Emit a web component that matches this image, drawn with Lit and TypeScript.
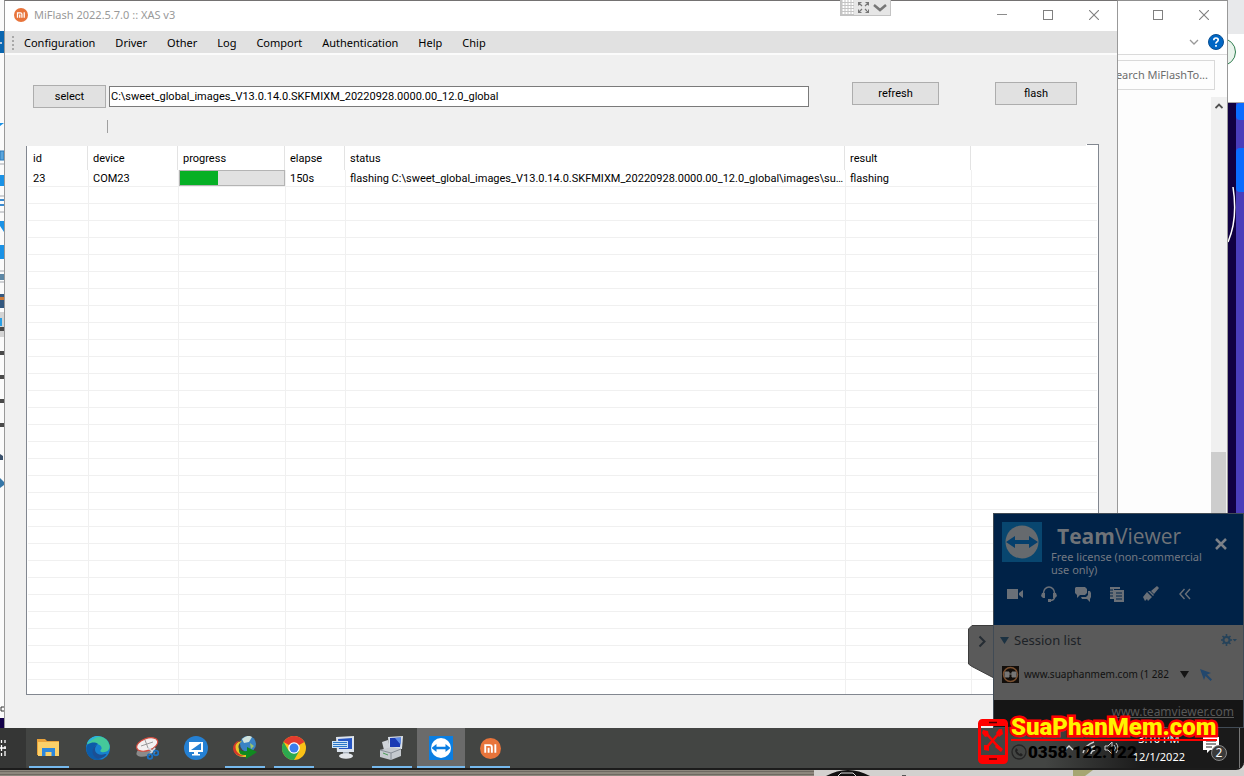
import { LitElement, html, css, svg } from "lit";
import { customElement } from "lit/decorators.js";

type Device = {
  id: string;
  device: string;
  progress: number;
  elapse: string;
  status: string;
  result: string;
};

const MENU = ["Configuration", "Driver", "Other", "Log", "Comport", "Authentication", "Help", "Chip"];

const DEVICES: Device[] = [
  {
    id: "23",
    device: "COM23",
    progress: 37,
    elapse: "150s",
    status: "flashing C:\\sweet_global_images_V13.0.14.0.SKFMIXM_20220928.0000.00_12.0_global\\images\\su…",
    result: "flashing",
  },
];

const EMPTY_ROWS = 29;

const miLogo = (size: number) => html`<svg width=${size} height=${size} viewBox="0 0 20 20" aria-hidden="true">
  <circle cx="10" cy="10" r="10" fill="#e8743b" />
  <path d="M5 14V6.800h4.200q2.100 0 2.100 2.200v5M8.200 14V9.400M14.600 6V14" fill="none" stroke="#fff" stroke-width="1.800" />
</svg>`;

const iconMin = html`<svg width="10" height="10" viewBox="0 0 10 10" aria-hidden="true"><path d="M0 4.500h10" stroke="#8c8c8c" /></svg>`;
const iconMax = html`<svg width="10" height="10" viewBox="0 0 10 10" aria-hidden="true"><rect x=".5" y=".5" width="9" height="9" fill="none" stroke="#808080" /></svg>`;
const iconClose = html`<svg width="10" height="10" viewBox="0 0 10 10" aria-hidden="true"><path d="M0 0l10 10M10 0L0 10" stroke="#808080" stroke-width="1.100" /></svg>`;

const captionButtons = () => html`<div class="caption">
  <button aria-label="Minimize">${iconMin}</button>
  <button aria-label="Maximize">${iconMax}</button>
  <button aria-label="Close">${iconClose}</button>
</div>`;

const icons = {
  folder: svg`<path d="M0 3h8l2 2h12v14H0z" fill="#e9a33b"/><path d="M1 6h21v14H1z" fill="#fbd069"/><path d="M5 20v-8h13v8h-3.500v-4h-6v4z" fill="#2d87dc"/>`,
  edge: svg`<circle cx="12" cy="12" r="12" fill="#1681cf"/><path d="M1 8C4-2 20-3 23.500 9c1 5-3 8-8 7-2-.5-1-2 0-3 1-4-6-7-14-5z" fill="#45c99a"/><path d="M1 8C3 1 10-1 15 .6c-6 .5-9 4-13 6z" fill="#2bb3dc"/><path d="M.2 13C0 7 8 5 12 8c-7 2-6 13 4 15.200C9 26 1 22 .2 13z" fill="#0d5ba8"/><path d="M11 9c-5 5 0 12 8 9 1 0 2 0 1 1-3 4-9 5-12 1-3-4-1-10 3-11z" fill="#1b4f94"/>`,
  snip: svg`<ellipse cx="11" cy="15" rx="10" ry="5" fill="#8b8b8b" transform="rotate(-20 11 15)"/><ellipse cx="12" cy="8.500" rx="11" ry="6" fill="#f3f0f0" stroke="#d34c3f" stroke-width="1.200" transform="rotate(-20 12 8)"/><path d="M10 4l3 8M6 10l12-4" stroke="#9a9a9a"/><path d="M13 12l7 5M20 12l-6 7" stroke="#cfd8e0" stroke-width="1.500"/><circle cx="15" cy="20.500" r="2.300" fill="none" stroke="#1d72c2" stroke-width="1.800"/><circle cx="21" cy="17" r="2.300" fill="none" stroke="#1d72c2" stroke-width="1.800"/>`,
  remote: svg`<circle cx="12" cy="12" r="12" fill="#2580d3"/><path d="M5 6h14v10H5z" fill="#fff"/><path d="M7 14l10-7v7z" fill="#2580d3"/><path d="M10 16h4v2h2v1.500H8V18h2z" fill="#fff"/>`,
  idm: svg`<circle cx="15" cy="8" r="8" fill="#3a83c4"/><path d="M9 3q6-5 10-2l-3 5-5 1z" fill="#cfe2dc"/><path d="M17 7l4 3-3 3z" fill="#9cc66b"/><path d="M1 13Q1 6 9 5q-5 4-3 8 2 5 7 4v4Q2 22 1 13z" fill="#e9c52a"/><path d="M0 13Q0 6 7 4.500Q1 8 3 14q2 5 9 6Q1 21 0 13z" fill="#d5382a"/><path d="M6 12q1 4 8 3v-4l10 5-11 7v-4q-8 1-7-7z" fill="#108a20"/>`,
  chrome: svg`<circle cx="12" cy="12" r="12" fill="#fbc116"/><path d="M12 12L1.600 6A12 12 0 0 1 22.400 6z" fill="#e33b2e"/><path d="M1.600 6A12 12 0 0 0 12 24l5.200-9L12 12 6.800 15z" fill="#2da94f"/><circle cx="12" cy="12" r="5.800" fill="#fff"/><circle cx="12" cy="12" r="4.500" fill="#3b7ded"/>`,
  monitor: svg`<path d="M5 1l18-1v16H6z" fill="#dce3ec"/><path d="M7 3l14-1v11H8z" fill="#2555c4"/><path d="M1 5h16v7H1z" fill="#cfe3f5"/><path d="M2 6.500h14M2 8.500h14M2 10.500h14" stroke="#2c78c9"/><path d="M12 16h6v4h-6z" fill="#aab3bd"/><ellipse cx="15" cy="20" rx="7" ry="2.800" fill="#e3e6ea"/>`,
  flasher: svg`<path d="M8 1l15-1-1 13H9z" fill="#d9e0e8"/><path d="M10 2l11-.5-1 9.500H10z" fill="#1b3bb4"/><path d="M15 2l6-.5-.5 7z" fill="#5b8be8"/><path d="M2 6l6-2 2 8-6 2z" fill="#cfd3d8"/><path d="M0 14l12-3 9 2v7l-10 4-11-3z" fill="#c5c9ce"/><path d="M0 14l11 3 10-4M11 17v7" stroke="#868c94" fill="none"/><path d="M3 17l5 2" stroke="#4a9b57"/>`,
  teamviewer: svg`<path d="M0 0h24v24H0z" fill="#0b7ee2"/><circle cx="12" cy="12" r="10" fill="#fff"/><path d="M2.500 12l5-4v2.800h9V8l5 4-5 4v-2.800h-9V16z" fill="#0b7ee2"/>`,
};

const APPS = [
  { name: "File Explorer", icon: icons.folder, open: true },
  { name: "Edge", icon: icons.edge, open: false },
  { name: "Snipping Tool", icon: icons.snip, open: false },
  { name: "Remote Desktop", icon: icons.remote, open: false },
  { name: "Download Manager", icon: icons.idm, open: true },
  { name: "Chrome", icon: icons.chrome, open: true },
  { name: "Virtual Keyboard", icon: icons.monitor, open: false },
  { name: "Flash Tool", icon: icons.flasher, open: true },
  { name: "TeamViewer", icon: icons.teamviewer, open: true, active: true },
  { name: "MiFlash", icon: null, open: true },
];

const shared = css`
  * { box-sizing: border-box; }
  button { font: inherit; color: inherit; border: 0; padding: 0; background: none; display: grid; place-items: center; }
  svg { display: block; }
  .caption { display: flex; }
  .caption button { width: 46px; height: 28px; flex: none; }
`;

@customElement("flash-window")
class FlashWindow extends LitElement {
  static styles = [shared, css`
    :host { display: flex; flex-direction: column; min-width: 0; background: #f0f0f0; border: solid #999; border-width: 0 1px; border-top: 1px solid #747272; font: 11px/16px "Roboto", sans-serif; color: #000; }
    .title { display: flex; align-items: center; height: 30px; padding: 0 0 2px 9px; gap: 6px; background: #fff; color: #999; font: 11px/16px "Noto Sans", sans-serif; }
    .title h1 { font: inherit; margin: 0; flex: 1; }
    .menu { display: flex; align-items: center; height: 22px; padding: 2px 0 0 7px; background: #e1e1e1; font: 11px/16px "Noto Sans", sans-serif; }
    .menu button { padding: 0 10px; white-space: nowrap; }
    .edge { height: 2px; background: #fbfbfb; }
    .tools { display: flex; align-items: flex-start; padding: 27px 40px 0 28px; }
    .path { display: flex; align-items: center; gap: 3px; flex: 1; padding-top: 3px; margin-right: 43px; }
    .push { height: 23px; background: #e1e1e1; border: 1px solid #adadad; }
    .select { width: 73px; }
    .refresh { width: 87px; margin-right: 56px; }
    .flash { width: 82px; }
    input { flex: 1; min-width: 0; height: 21px; border: 1px solid #7a7a7a; padding: 0 1px; background: #fff; font: inherit; color: #000; border-radius: 0; }
    .tick { width: 1px; height: 13px; margin: 12px 0 11px 102px; background: #a0a0a0; }
    .list { margin: 0 18px 33px 21px; border: 1px solid #828790; border-top: 0; background: #fff; padding: 2px 1px 0; position: relative; }
    .list::before { content: ""; position: absolute; right: -1px; top: 0; width: 12px; height: 1px; background: #828790; }
    .list::after { content: ""; position: absolute; left: -1px; right: 0; top: 0; height: 2px; background: linear-gradient(#f0f0f0, #f0f0f0) left / calc(100% - 12px) 2px no-repeat; }
    table { width: 100%; table-layout: fixed; border-collapse: separate; border-spacing: 0; }
    th, td { padding: 0 0 0 4px; text-align: left; font-weight: normal; white-space: nowrap; overflow: hidden; }
    th { height: 24px; padding-top: 2px; background: linear-gradient(#e3e3e3, #e3e3e3) right 1px top / 1px 100% no-repeat; }
    td { height: 17px; line-height: 14px; border: solid #f0f0f0; border-width: 0 1px 1px 0; }
    th:first-child, tr td:first-child { padding-left: 5px; }
    th:last-child, td:last-child { border-right: 0; background: none; }
    .first td { padding-top: 2px; }
    .first .bar { padding: 0; }
    .rest td { height: 14px; border-bottom: 0; }
    .c1 { width: 61px; } .c2 { width: 90px; } .c3 { width: 107px; } .c4 { width: 60px; } .c6 { width: 126px; } .c7 { width: 125px; }
    progress { appearance: none; display: block; width: 100%; height: 16px; border: 1px solid #b4b4b4; background: #e1e1e1; }
    progress::-webkit-progress-bar { background: #e1e1e1; }
    progress::-webkit-progress-value { background: #06b025; }
  `];

  render() {
    const cols = ["id", "device", "progress", "elapse", "status", "result", ""];
    return html`
      <header class="title">${miLogo(14)}<h1>MiFlash 2022.5.7.0 :: XAS v3</h1>${captionButtons()}</header>
      <nav class="menu">
        <svg width="2" height="14" viewBox="0 0 2 14" aria-hidden="true"><path d="M1 0v14" stroke="#a8a8a8" stroke-width="2" stroke-dasharray="2 2" /></svg>
        ${MENU.map((m) => html`<button>${m}</button>`)}
      </nav>
      <div class="edge"></div>
      <div class="tools">
        <div class="path">
          <button class="push select">select</button>
          <input aria-label="Image folder" .value=${"C:\\sweet_global_images_V13.0.14.0.SKFMIXM_20220928.0000.00_12.0_global"} />
        </div>
        <button class="push refresh">refresh</button>
        <button class="push flash">flash</button>
      </div>
      <div class="tick"></div>
      <div class="list">
        <table>
          <colgroup>${[1, 2, 3, 4, 5, 6, 7].map((n) => html`<col class="c${n}" />`)}</colgroup>
          <thead><tr>${cols.map((c) => html`<th>${c}</th>`)}</tr></thead>
          <tbody>
            ${DEVICES.map((d) => html`<tr class="first">
              <td>${d.id}</td><td>${d.device}</td>
              <td class="bar"><progress aria-label="Progress" max="100" value=${d.progress}></progress></td>
              <td>${d.elapse}</td><td>${d.status}</td><td>${d.result}</td><td></td>
            </tr>`)}
            ${Array.from({ length: EMPTY_ROWS }, () => html`<tr>${cols.map(() => html`<td></td>`)}</tr>`)}
            <tr class="rest">${cols.map(() => html`<td></td>`)}</tr>
          </tbody>
        </table>
      </div>`;
  }
}

@customElement("explorer-window")
class ExplorerWindow extends LitElement {
  static styles = [shared, css`
    :host { display: flex; flex-direction: column; min-width: 0; overflow: hidden; background: #fdfdfd; border-top: 1px solid #8f8f8f; border-right: 1px solid #999; font: 11px/16px "Noto Sans", sans-serif; color: #6d6d6d; }
    .caption { justify-content: flex-end; height: 29px; background: #fff; }
    .ribbon { display: flex; justify-content: flex-end; align-items: center; gap: 9px; height: 25px; padding-right: 3px; border-bottom: 1px solid #dadada; background: #fff; }
    .search { display: flex; justify-content: flex-end; height: 30px; margin: 5px 12px 7px 0; border: 1px solid #d9d9d9; border-left: 0; }
    .search input { width: 124px; flex: none; border: 0; padding: 0 6px 0 0; background: none; text-align: right; font: inherit; color: inherit; }
    .search input::placeholder { color: #6d6d6d; opacity: 1; }
    .scroll { flex: 1; align-self: flex-end; width: 16px; background: #f0f0f0; display: flex; flex-direction: column; }
    .scroll button { height: 17px; }
    .track { flex: 338; }
    .thumb { flex: 276; margin-right: 1px; background: #cdcdcd; }
  `];
  render() {
    return html`
      ${captionButtons()}
      <div class="ribbon">
        <svg width="10" height="6" viewBox="0 0 10 6" aria-hidden="true"><path d="M1 1l4 4 4-4" fill="none" stroke="#999" stroke-width="1.300" /></svg>
        <svg width="16" height="16" viewBox="0 0 16 16" role="img" aria-label="Help"><circle cx="8" cy="8" r="7.500" fill="#0067c5" stroke="#0a4f92" /><path d="M5.800 6.200Q5.800 4 8 4t2.200 2q0 1-1.200 1.700T8 9.600M8 11v1.800" fill="none" stroke="#fff" stroke-width="1.700" /></svg>
      </div>
      <div class="search"><input aria-label="Search MiFlashTool" placeholder="Search MiFlashTo..." /></div>
      <div class="scroll">
        <button aria-label="Scroll up"><svg width="8" height="6" viewBox="0 0 8 6" aria-hidden="true"><path d="M.5 5L4 1.500 7.500 5" fill="none" stroke="#505050" stroke-width="1.800" /></svg></button>
        <div class="track"></div><div class="thumb"></div>
      </div>`;
  }
}

@customElement("session-panel")
class SessionPanel extends LitElement {
  static styles = [shared, css`
    :host { display: flex; align-items: flex-start; font: 11px/13px "Noto Sans", sans-serif; color: #737982; }
    .handle { margin-top: 112px; flex: none; }
    .panel { flex: 1; min-width: 0; border: 1px solid #414b55; background: #5a5a5a; }
    .head { height: 111px; background: #002247; padding: 8px 16px 0 8px; }
    .brand { display: flex; gap: 9px; height: 64px; }
    .brand h2 { margin: 0 0 0 6px; font: 21px/28px "Open Sans", sans-serif; color: #6f7378; height: 28px; }
    .brand p { margin: 0; }
    .words { flex: 1; white-space: nowrap; }
    .close { align-self: flex-start; margin-top: 16px; }
    .icons { display: flex; gap: 18px; padding-left: 5px; }
    .icons button { width: 16px; height: 16px; }
    .session { display: flex; align-items: center; height: 30px; padding: 0 6px 0 6px; gap: 5px; font: 13px/18px "Noto Sans", sans-serif; color: #1d2227; }
    .session span { flex: 1; }
    .peer { display: flex; align-items: center; height: 45px; padding: 0 0 6px 8px; font-size: 10px; color: #111; }
    .peer span { width: 147px; margin: 0 9px 0 5px; white-space: nowrap; }
    .peer svg + svg { margin-left: 11px; }
    .foot { height: 27px; background: #151515; text-align: right; padding: 4px 9px 0 0; font: 12px/16px "Noto Sans", sans-serif; }
    .foot a { color: #585858; }
  `];
  render() {
    return html`
      <svg class="handle" width="25" height="54" viewBox="0 0 25 54" aria-hidden="true">
        <path d="M25 .5H4L.5 4v35L4 41.500 25 52.500" fill="#5a5a5a" stroke="#3c3c3c" /><path d="M11.500 11.500l5 5-5 5" fill="none" stroke="#252c33" stroke-width="2" />
      </svg>
      <section class="panel">
        <div class="head">
          <div class="brand">
            <svg width="40" height="40" viewBox="0 0 40 40" aria-hidden="true"><path d="M0 0h40v40H0z" fill="#08466f" /><circle cx="20" cy="20" r="16.500" fill="#666a6e" /><path d="M4 20l9-6v4h14v-4l9 6-9 6v-4H13v4z" fill="#053f6c" /></svg>
            <div class="words"><h2><b>Team</b>Viewer</h2><p>Free license (non-commercial<br />use only)</p></div>
            <button class="close" aria-label="Close"><svg width="12" height="12" viewBox="0 0 12 12" aria-hidden="true"><path d="M1 1l10 10M11 1L1 11" stroke="#7b8087" stroke-width="2.500" /></svg></button>
          </div>
          <div class="icons">
            <button aria-label="Video"><svg width="16" height="12" viewBox="0 0 16 12"><path d="M0 1h11v10H0zM12 5l4-3v8l-4-3z" fill="#6a7078" /></svg></button>
            <button aria-label="Audio"><svg width="16" height="16" viewBox="0 0 16 16"><path d="M2.500 9V7a5.500 6 0 0 1 11 0v2M13.500 11q0 3.500-5 3.500" fill="none" stroke="#6a7078" stroke-width="1.500" /><path d="M1 7h3v5H2L0 10zM15 7h-3v5h2l2-2zM7 13h3v3H7z" fill="#6a7078" /></svg></button>
            <button aria-label="Chat"><svg width="16" height="16" viewBox="0 0 16 16"><path d="M1 1h9l2 2v4l-2 2H5l-3 3V9L0 7V2z" fill="#6a7078" /><path d="M13 5h2l1 2v4l-1 2v3l-3-3H7l-1-2h5l2-2z" fill="#6a7078" /></svg></button>
            <button aria-label="Files"><svg width="16" height="16" viewBox="0 0 16 16"><path d="M1 1h10v2H5v10H1z" fill="#6a7078" /><path d="M5 4h10v12H5z" fill="#6a7078" /><path d="M1 4h3M1 7h3M1 10h3M7 7h6M7 10h6M7 13h6" stroke="#002247" /></svg></button>
            <button aria-label="Whiteboard"><svg width="16" height="16" viewBox="0 0 16 16"><path d="M14 0l2 2-5 6-3-3zM7 5l4 4-1 1-5-5zM4 6l5 5-4 4-1-2-2 2-1-2-1-2z" fill="#6a7078" /></svg></button>
            <button aria-label="Collapse"><svg width="12" height="12" viewBox="0 0 12 12"><path d="M5.500 1L1 6l4.500 5M11 1L6.500 6l4.500 5" fill="none" stroke="#6a7078" stroke-width="1.400" /></svg></button>
          </div>
        </div>
        <div class="session">
          <svg width="9" height="7" viewBox="0 0 9 7" aria-hidden="true"><path d="M0 0h9L4.500 7z" fill="#1c3242" /></svg>
          <span>Session list</span>
          <svg width="16" height="12" viewBox="0 0 16 12" aria-hidden="true"><circle cx="5.500" cy="6" r="3" fill="none" stroke="#26435a" stroke-width="2" /><path d="M5.500 0v2.500M5.500 9.500V12M0 6h2M9 6h2M1.500 2l1.500 1.500M8 8.500L9.500 10M9.500 2L8 3.500M3 8.500L1.500 10" stroke="#26435a" stroke-width="1.600" /><path d="M11.500 5H16l-2.200 2.500z" fill="#26435a" /></svg>
        </div>
        <div class="peer">
          <svg width="17" height="17" viewBox="0 0 17 17" aria-hidden="true"><path d="M0 0h17v17H0z" fill="#120e0b" /><circle cx="8.500" cy="8.500" r="7" fill="none" stroke="#7a5030" stroke-width="1.500" /><path d="M3 6h4v5H3zM10 6h4v5h-4zM3 8h11" fill="#777" stroke="#777" /></svg>
          <span>www.suaphanmem.com (1 282</span>
          <svg width="9" height="7" viewBox="0 0 9 7" aria-hidden="true"><path d="M0 0h9L4.500 7z" fill="#141414" /></svg>
          <svg width="12" height="12" viewBox="0 0 12 12" aria-hidden="true"><path d="M0 0l11 4-4 1.500 5 5L10.500 12l-5-5L4 11z" fill="#22476d" /></svg>
        </div>
        <div class="foot"><a href="#">www.teamviewer.com</a></div>
      </section>`;
  }
}

@customElement("app-root")
class AppRoot extends LitElement {
  static styles = [shared, css`
    :host { display: block; position: relative; min-height: 100vh; overflow: hidden; background: #d8d6d4; font: 11px/16px "Noto Sans", sans-serif; }
    .work { display: grid; grid-template-columns: 4px minmax(0, 1fr) 110px 16px; }
    .sliver, .backdrop { min-height: 0; overflow: hidden; }
    .backdrop { background: linear-gradient(90deg, #100042 8px, #4a3dba 8px); }
    .taskbar { display: flex; height: 42px; padding-right: 4px; background: linear-gradient(90deg, #353635 26px, #434543 26px, #434543 84%, #1a1a1a 92%); border-bottom: 2px solid #1c1c1c; border-radius: 0 0 8px 0; color: #fff; }
    .task { width: 25px; justify-items: start; }
    .apps { display: flex; gap: 1px; flex: 1; }
    .apps button { width: 48px; height: 40px; position: relative; }
    .apps .open::after { content: ""; position: absolute; left: 4px; right: 4px; bottom: 0; height: 2px; background: #76b9ed; }
    .apps .active { background: #6b6b6b; }
    .apps .active::after { left: 0; right: 0; }
    .tray { display: flex; align-items: center; gap: 8px; }
    .clock { text-align: center; line-height: 18px; margin: 0 1px 0 6px; }
    .note { width: 46px; height: 40px; padding-right: 4px; border-right: 1px solid #777; }
    .below { height: 6px; overflow: hidden; }
    .remote { position: absolute; left: 840px; top: 0; display: flex; align-items: center; height: 16px; width: 51px; background: #e6e6e6; border: 1px solid #c3c3c3; border-top: 0; gap: 4px; }
    .session { position: absolute; right: 0; bottom: 48px; width: 276px; }
    .mark { position: absolute; right: 28px; bottom: 12px; width: 238px; display: grid; grid-template-columns: 30px 1fr; column-gap: 3px; align-items: end; }
    .mark strong { display: block; font: 900 24px/24px "Roboto", sans-serif; color: #fff200; -webkit-text-stroke: 5px #f00; paint-order: stroke fill; white-space: nowrap; border-bottom: 2px solid #f00; }
    .phone { display: flex; align-items: center; gap: 1px; padding: 2px 0 3px; font: 900 17px/18px "Roboto", sans-serif; color: #000; }
  `];

  render() {
    return html`
      <div class="work">
        <svg class="sliver" width="4" height="728" viewBox="0 0 4 728" aria-hidden="true">
          <path d="M0 0h4v728H0z" fill="#fbfbfb" /><path d="M0 31h4v22H0z" fill="#0a66b0" /><path d="M0 42h2v2H0z" fill="#b9c8dc" />
          <path d="M0 123h4l-4 3zM0 175h4v11H0zM0 221h4v11l-4-6zM0 245h4v14H0z" fill="#1a92e6" />
          <path d="M0 151h4v9H0z" fill="#5aa5dc" stroke="#2a78b8" /><path d="M0 164h4M0 196h4M0 212h4M0 271h4M0 282h4" stroke="#a2a6ad" />
          <path d="M0 199h4v2H0zM0 204h4v2H0z" fill="#3b8bd0" /><path d="M0 274h4v6H0z" fill="#5d87a5" />
          <path d="M0 294h4v14H0z" fill="#34587f" /><path d="M0 297h4v3H0z" fill="#cf7b38" />
          <path d="M0 312h4v25H0z" fill="#d4d4d4" /><path d="M0 318h2v8H0z" fill="#2aa0e6" />
          <path d="M0 327h4v4H0zM0 351h4v4H0zM0 375h4v4H0zM0 399h4v4H0zM0 423h4v4H0z" fill="#4a4a4a" />
          <path d="M0 454l3 2v4H0z" fill="#3a506b" /><path d="M0 478l4 4v3l-4 3z" fill="#3577a8" /><path d="M1 707h3M1 707v4h3" stroke="#333" fill="none" />
          <path d="M0 718h4v10H0z" fill="#120048" />
        </svg>
        <flash-window></flash-window>
        <explorer-window></explorer-window>
        <svg class="backdrop" width="16" height="728" viewBox="0 0 16 728" aria-hidden="true">
          <path d="M0 0h16v34H0z" fill="#e8e9eb" /><path d="M0 34h16v68H0z" fill="#fff" />
          <circle cx="-6" cy="52" r="13.500" fill="#e9f3ec" stroke="#2f7d4f" /><path d="M0 102h16v1H0z" fill="#aaa" />
          <rect x="8" y="103" width="12" height="17" rx="4" fill="#0a6cff" /><rect x="8" y="148" width="12" height="44" rx="4" fill="#0a6cff" />
          <path d="M5 187q5 32-5 55" fill="none" stroke="#fff" stroke-width="1.500" />
        </svg>
      </div>
      <footer class="taskbar">
        <button class="task" aria-label="Task View"><svg width="7" height="16" viewBox="0 0 7 16"><path d="M1.500 0v3M1.500 5v6M1.500 13v3M5 0v3M5 6v3M5 11v5M0 8h6" stroke="#fff" stroke-width="1.300" /></svg></button>
        <div class="apps">
          ${APPS.map((a) => html`<button aria-label=${a.name} class="${a.open ? "open" : ""} ${a.active ? "active" : ""}">
            ${a.icon ? html`<svg width="24" height="24" viewBox="0 0 24 24" aria-hidden="true">${a.icon}</svg>` : miLogo(21)}
          </button>`)}
        </div>
        <div class="tray">
          <svg width="10" height="8" viewBox="0 0 10 8" aria-hidden="true"><path d="M1 6l4-4 4 4" fill="none" stroke="#ddd" stroke-width="1.300" /></svg>
          <svg width="14" height="14" viewBox="0 0 14 14" aria-hidden="true"><path d="M1 12Q3 4 12 1M5 13q1-6 8-8M9 13q0-3 4-4" fill="none" stroke="#ccc" stroke-width="1.400" /></svg>
          <svg width="15" height="14" viewBox="0 0 15 14" aria-hidden="true"><path d="M1 5h3l4-4v12L4 9H1zM10 4q3 3 0 6M12 2q4 5 0 10" fill="none" stroke="#ccc" /></svg>
          <div class="clock">3:10 PM<br />12/1/2022</div>
          <button class="note" aria-label="2 notifications"><svg width="26" height="26" viewBox="0 0 26 26"><path d="M1 2h16v13h-9l-3 3v-3H1z" fill="#fff" /><path d="M4 6h10M4 9h10M4 12h6" stroke="#222" /><circle cx="17" cy="18" r="7.500" fill="#3a3a3a" stroke="#888" /><text x="17" y="22" text-anchor="middle" font-size="12" fill="#fff">2</text></svg></button>
        </div>
      </footer>
      <svg class="below" width="1244" height="6" viewBox="0 0 1244 6" aria-hidden="true">
        <path d="M0 0h814v6H0z" fill="#8d877d" /><path d="M0 1.500h814M0 4.500h814" stroke="#6f6a62" /><path d="M814 0h430v6H814z" fill="#d3d1cf" />
        <path d="M826 6q22-12 44 0z" fill="#111" /><path d="M838 6l3-3h12l3 3" fill="none" stroke="#ddd" /><path d="M902 5h4v1h-4z" fill="#555" /><path d="M1073 0h20l-8 6h-12z" fill="#a6a672" />
      </svg>
      <div class="remote">
        <svg width="13" height="15" viewBox="0 0 13 15" aria-hidden="true"><path d="M0 0h13v15H0z" fill="#c4c4c4" /><path d="M2.500 0v15M5.500 0v15M8.500 0v15M11.500 0v15" stroke="#fff" stroke-width="2" stroke-dasharray="2 1" /></svg>
        <svg width="11" height="11" viewBox="0 0 11 11" aria-hidden="true"><path d="M.5 3.500v-3h3M7.500.5h3v3M10.500 7.500v3h-3M3.500 10.500h-3v-3M1 1l3 3M10 1L7 4M10 10L7 7M1 10l3-3" fill="none" stroke="#777" stroke-width="1.200" /></svg>
        <svg width="14" height="8" viewBox="0 0 14 8" aria-hidden="true"><path d="M1 1l6 5 6-5" fill="none" stroke="#777" stroke-width="2.500" /></svg>
      </div>
      <session-panel class="session"></session-panel>
      <div class="mark">
        <svg width="30" height="45" viewBox="0 0 30 45" aria-hidden="true">
          <rect x="1.500" y="1.500" width="27" height="42" rx="3" fill="none" stroke="#f00" stroke-width="3" /><path d="M2 2h26v5H2zM2 36h26v7H2z" fill="#f00" />
          <path d="M11 3.500h8M11 40h8" stroke="#4a0000" stroke-width="1.500" /><path d="M8 14l14 16M22 13L9 28" stroke="#f00" stroke-width="2.500" /><path d="M5 11l5 1 1 5-4 1-3-4zM19 25l6 5-2 3-6-5zM21 10l3 0 1 5-4 3-3-4zM6 26l5 0 0 6-5-1z" fill="#f00" />
        </svg>
        <div>
          <strong>SuaPhanMem.com</strong>
          <div class="phone"><svg width="16" height="16" viewBox="0 0 16 16" aria-hidden="true"><circle cx="8" cy="8" r="7" fill="none" stroke="#252525" stroke-width="1.300" /><path d="M5 4l2 2-1 1.500 2.500 2.500L10 9l2 2-2 1.500Q6 12 4 7z" fill="#222" /></svg>0358.122.122</div>
        </div>
      </div>`;
  }
}
